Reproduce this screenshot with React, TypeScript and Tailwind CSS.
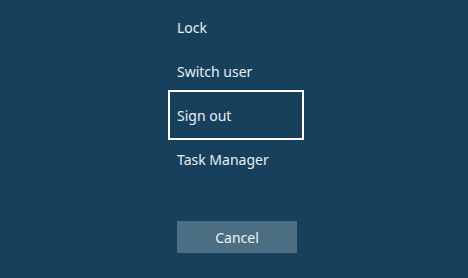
const items = ['Lock', 'Switch user', 'Sign out', 'Task Manager'];

export default function App() {
  return (
    <div
      className="flex h-[278px] w-[468px] flex-col bg-[#17405d] pl-[171px] pt-[5px] text-[14px] text-[#e8eef3]"
      style={{ fontFamily: '"Noto Sans", "Open Sans", sans-serif' }}
    >
      {items.map((label) => (
        <div
          key={label}
          className={
            label === 'Sign out'
              ? 'flex h-[44px] w-[130px] items-center px-[6px] outline-2 outline-offset-1 outline-white'
              : 'flex h-[44px] w-[130px] items-center px-[6px]'
          }
        >
          {label}
        </div>
      ))}
      <button className="ml-[6px] mt-[40px] flex h-[32px] w-[120px] items-center justify-center bg-[#4b6e83] text-[14px] text-[#eef3f6]">
        Cancel
      </button>
    </div>
  );
}
